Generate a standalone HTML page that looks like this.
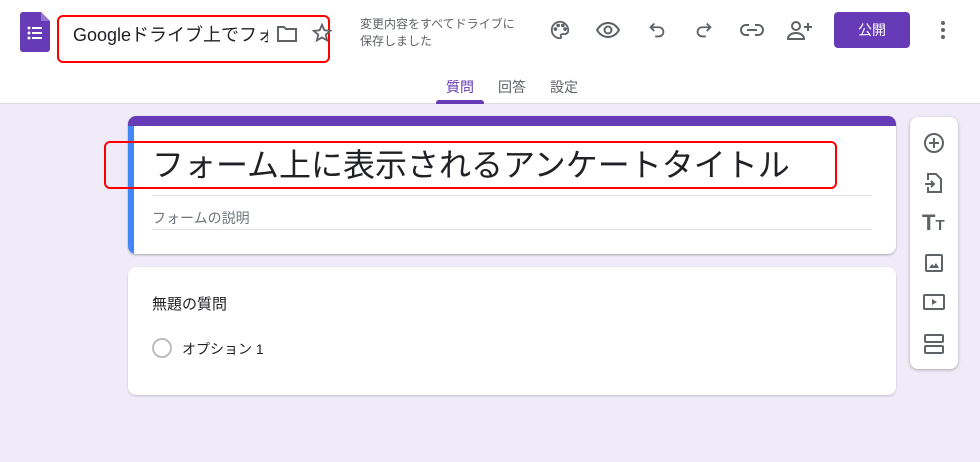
<!DOCTYPE html><html><head><meta charset="utf-8"><style>
*{margin:0;padding:0;box-sizing:border-box}
body{width:980px;height:462px;background:#f0ebf8;font-family:"Liberation Sans","Noto Sans CJK JP",sans-serif;position:relative;overflow:hidden;color:#202124}
.a{position:absolute}
svg.i{position:absolute;fill:none;stroke:#5f6368;stroke-width:2}
</style></head><body>
<div class="a" style="left:0;top:0;width:980px;height:104px;background:#fff;border-bottom:1px solid #dadce0"></div>
<svg class="a" style="left:20px;top:12px" width="30" height="40" viewBox="0 0 30 40"><path d="M3 0h18l9 9v28a3 3 0 0 1-3 3H3a3 3 0 0 1-3-3V3a3 3 0 0 1 3-3z" fill="#673ab7"/><path d="M21 0v9h9z" fill="#9575cd"/><g fill="#fff"><circle cx="9" cy="16" r="1.5"/><circle cx="9" cy="21" r="1.5"/><circle cx="9" cy="26" r="1.5"/><rect x="12" y="15" width="10" height="2"/><rect x="12" y="20" width="10" height="2"/><rect x="12" y="25" width="10" height="2"/></g></svg>
<div class="a" style="left:57px;top:15px;width:273px;height:48px;border:2px solid #f00;border-radius:6px"></div>
<div class="a" style="left:73px;top:23px;width:195px;overflow:hidden;white-space:nowrap;font-size:18px;line-height:24px">Googleドライブ上でフォーム</div>
<svg class="i" style="left:276px;top:24px" width="22" height="20" viewBox="0 0 22 20"><path d="M2 3h6l2 2h10v12H2z"/></svg>
<svg class="i" style="left:311px;top:22px" width="22" height="22" viewBox="0 0 24 24" stroke-width="1.8"><path d="M12 3l2.6 6 6.4.6-4.9 4.2 1.5 6.3L12 16.8 6.4 20.1l1.5-6.3L3 9.6l6.4-.6z"/></svg>
<div class="a" style="left:360px;top:16px;font-size:12px;line-height:17px;color:#5f6368">変更内容をすべてドライブに<br>保存しました</div>
<svg class="i" style="left:549px;top:19px" width="22" height="22" viewBox="0 0 24 24"><path d="M12 3a9 9 0 0 0 0 18c1.2 0 1.6-1 1-2-.7-1.2.1-2.5 1.5-2.5H17a4 4 0 0 0 4-4c0-5-4-9.5-9-9.5z"/><circle cx="7" cy="11" r="1" fill="#5f6368"/><circle cx="10" cy="7" r="1" fill="#5f6368"/><circle cx="15" cy="7" r="1" fill="#5f6368"/><circle cx="17.5" cy="11" r="1" fill="#5f6368"/></svg>
<svg class="i" style="left:596px;top:19px" width="24" height="22" viewBox="0 0 24 22"><path d="M1 11c3-5 7-7 11-7s8 2 11 7c-3 5-7 7-11 7S4 16 1 11z"/><circle cx="12" cy="11" r="3.5"/></svg>
<svg class="i" style="left:646px;top:19px" width="22" height="22" viewBox="0 0 24 24"><path d="M9 5L5 9l4 4M5 9h9a5 5 0 0 1 0 10h-4"/></svg>
<svg class="i" style="left:693px;top:19px" width="22" height="22" viewBox="0 0 24 24"><path d="M15 5l4 4-4 4M19 9h-9a5 5 0 0 0 0 10h4"/></svg>
<svg class="i" style="left:740px;top:19px" width="24" height="22" viewBox="0 0 24 22"><path d="M9 6H6a5 5 0 0 0 0 10h3M15 6h3a5 5 0 0 1 0 10h-3M7 11h10"/></svg>
<svg class="i" style="left:787px;top:18px" width="26" height="24" viewBox="0 0 26 24"><circle cx="9" cy="8" r="4"/><path d="M1 21c0-4 4-6 8-6s8 2 8 6zM21 5v8M17 9h8"/></svg>
<div class="a" style="left:834px;top:12px;width:76px;height:36px;background:#673ab7;border-radius:4px;color:#fff;font-size:14px;text-align:center;line-height:36px">公開</div>
<svg class="a" style="left:940px;top:20px" width="6" height="20"><g fill="#5f6368"><circle cx="3" cy="3" r="2"/><circle cx="3" cy="10" r="2"/><circle cx="3" cy="17" r="2"/></g></svg>
<div class="a" style="left:446px;top:77px;font-size:14px;color:#673ab7">質問</div>
<div class="a" style="left:436px;top:100px;width:48px;height:4px;background:#673ab7;border-radius:3px 3px 0 0"></div>
<div class="a" style="left:498px;top:77px;font-size:14px;color:#5f6368">回答</div>
<div class="a" style="left:550px;top:77px;font-size:14px;color:#5f6368">設定</div>

<div class="a" style="left:128px;top:116px;width:768px;height:138px;background:#fff;border-radius:8px;overflow:hidden;box-shadow:0 1px 2px rgba(0,0,0,.3)">
<div class="a" style="left:0;top:0;width:768px;height:10px;background:#673ab7"></div>
<div class="a" style="left:0;top:10px;width:6px;height:128px;background:#4285f4"></div>
<div class="a" style="left:24px;top:79px;width:720px;height:1px;background:#e0e0e0"></div>
<div class="a" style="left:24px;top:92px;font-size:14px;color:#70757a">フォームの説明</div>
<div class="a" style="left:24px;top:113px;width:720px;height:1px;background:#e0e0e0"></div>
</div>
<div class="a" style="left:152px;top:142px;font-size:32px;line-height:46px;white-space:nowrap">フォーム上に表示されるアンケートタイトル</div>
<div class="a" style="left:104px;top:141px;width:733px;height:48px;border:2px solid #f00;border-radius:6px"></div>

<div class="a" style="left:128px;top:267px;width:768px;height:128px;background:#fff;border-radius:8px;box-shadow:0 1px 2px rgba(0,0,0,.2)">
<div class="a" style="left:24px;top:26px;font-size:15px">無題の質問</div>
<div class="a" style="left:24px;top:71px;width:20px;height:20px;border:2px solid #bdbdbd;border-radius:50%"></div>
<div class="a" style="left:54px;top:72px;font-size:14px">オプション 1</div>
</div>

<div class="a" style="left:910px;top:117px;width:48px;height:252px;background:#fff;border-radius:8px;box-shadow:0 1px 3px rgba(0,0,0,.3)"></div>
<svg class="i" style="left:923px;top:132px" width="22" height="22" viewBox="0 0 22 22"><circle cx="11" cy="11" r="9"/><path d="M11 6v10M6 11h10"/></svg>
<svg class="i" style="left:924px;top:172px" width="20" height="22" viewBox="0 0 20 22"><path d="M4 8V2h8l5 5v13H4v-5M1 12h9M7 9l3 3-3 3"/></svg>
<div class="a" style="left:922px;top:210px;font-weight:bold;color:#5f6368;font-size:22px;line-height:26px">T<span style="font-size:15px">T</span></div>
<svg class="i" style="left:924px;top:253px" width="20" height="20" viewBox="0 0 20 20"><rect x="2" y="2" width="16" height="16" rx="1"/><path d="M5 15l3-4 2 2 2-3 3 5z" fill="#5f6368" stroke="none"/></svg>
<svg class="i" style="left:922px;top:293px" width="24" height="18" viewBox="0 0 24 18"><rect x="2" y="2" width="20" height="14" rx="1"/><path d="M10 6v6l5-3z" fill="#5f6368" stroke="none"/></svg>
<svg class="i" style="left:923px;top:333px" width="22" height="22" viewBox="0 0 22 22"><rect x="2" y="2" width="18" height="7" rx="1"/><rect x="2" y="13" width="18" height="7" rx="1"/></svg>
</body></html>
